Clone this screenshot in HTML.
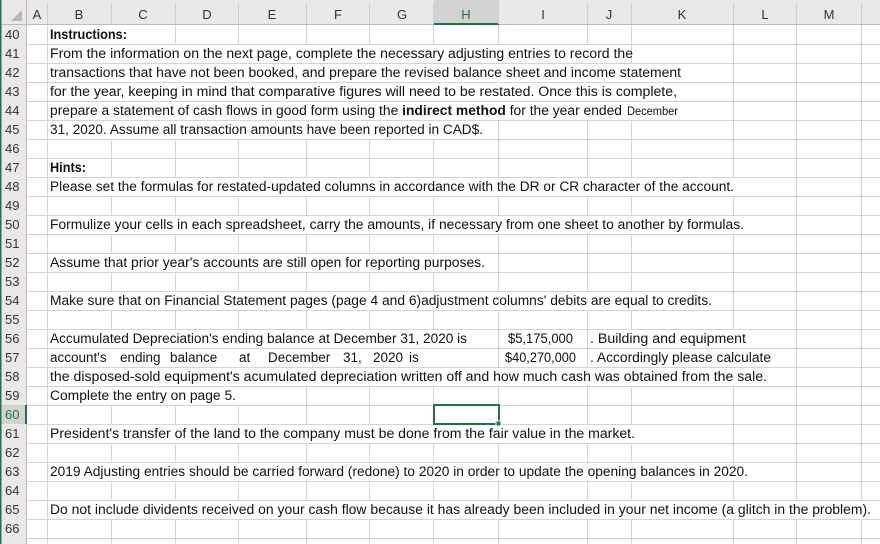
<!DOCTYPE html>
<html><head><meta charset="utf-8"><style>
html,body{margin:0;padding:0;background:#fff;width:880px;height:544px;overflow:hidden}
svg{display:block}
text{font-family:"Liberation Sans",sans-serif}
.t{font-size:13.5px;fill:#111}
.h{font-size:13px;fill:#333}
.b{font-weight:bold}
</style></head><body>
<svg width="880" height="544" viewBox="0 0 880 544" xmlns="http://www.w3.org/2000/svg">
<rect width="880" height="544" fill="#fff"/>
<g stroke="#d4d4d4" stroke-width="1">
<line x1="27" y1="44.5" x2="880" y2="44.5"/><line x1="27" y1="63.5" x2="880" y2="63.5"/><line x1="27" y1="82.5" x2="880" y2="82.5"/><line x1="27" y1="101.5" x2="880" y2="101.5"/><line x1="27" y1="120.5" x2="880" y2="120.5"/><line x1="27" y1="139.5" x2="880" y2="139.5"/><line x1="27" y1="158.5" x2="880" y2="158.5"/><line x1="27" y1="177.5" x2="880" y2="177.5"/><line x1="27" y1="196.5" x2="880" y2="196.5"/><line x1="27" y1="215.5" x2="880" y2="215.5"/><line x1="27" y1="234.5" x2="880" y2="234.5"/><line x1="27" y1="253.5" x2="880" y2="253.5"/><line x1="27" y1="272.5" x2="880" y2="272.5"/><line x1="27" y1="291.5" x2="880" y2="291.5"/><line x1="27" y1="310.5" x2="880" y2="310.5"/><line x1="27" y1="329.5" x2="880" y2="329.5"/><line x1="27" y1="348.5" x2="880" y2="348.5"/><line x1="27" y1="367.5" x2="880" y2="367.5"/><line x1="27" y1="386.5" x2="880" y2="386.5"/><line x1="27" y1="405.5" x2="880" y2="405.5"/><line x1="27" y1="424.5" x2="880" y2="424.5"/><line x1="27" y1="443.5" x2="880" y2="443.5"/><line x1="27" y1="462.5" x2="880" y2="462.5"/><line x1="27" y1="481.5" x2="880" y2="481.5"/><line x1="27" y1="500.5" x2="880" y2="500.5"/><line x1="27" y1="519.5" x2="880" y2="519.5"/><line x1="27" y1="538.5" x2="880" y2="538.5"/>
</g>
<g stroke="#d4d4d4" stroke-width="1">
<line x1="47.5" y1="25" x2="47.5" y2="544"/><line x1="111.5" y1="25" x2="111.5" y2="544"/><line x1="175.5" y1="25" x2="175.5" y2="544"/><line x1="238.5" y1="25" x2="238.5" y2="544"/><line x1="306.5" y1="25" x2="306.5" y2="544"/><line x1="369.5" y1="25" x2="369.5" y2="544"/><line x1="433.5" y1="25" x2="433.5" y2="544"/><line x1="498.5" y1="25" x2="498.5" y2="544"/><line x1="587.5" y1="25" x2="587.5" y2="544"/><line x1="631.5" y1="25" x2="631.5" y2="544"/><line x1="733.5" y1="25" x2="733.5" y2="544"/><line x1="796.5" y1="25" x2="796.5" y2="544"/><line x1="861.5" y1="25" x2="861.5" y2="544"/>
</g>
<g fill="#fff">
<rect x="48" y="25" width="127" height="19"/>
<rect x="48" y="45" width="583" height="18"/>
<rect x="48" y="64" width="685" height="18"/>
<rect x="48" y="83" width="685" height="18"/>
<rect x="48" y="102" width="685" height="18"/>
<rect x="48" y="121" width="450" height="18"/>
<rect x="48" y="159" width="63" height="18"/>
<rect x="48" y="178" width="748" height="18"/>
<rect x="48" y="216" width="748" height="18"/>
<rect x="48" y="254" width="450" height="18"/>
<rect x="48" y="292" width="685" height="18"/>
<rect x="48" y="330" width="450" height="18"/>
<rect x="588" y="330" width="208" height="18"/>
<rect x="48" y="349" width="450" height="18"/>
<rect x="588" y="349" width="208" height="18"/>
<rect x="48" y="368" width="748" height="18"/>
<rect x="48" y="387" width="258" height="18"/>
<rect x="48" y="425" width="685" height="18"/>
<rect x="48" y="463" width="748" height="18"/>
<rect x="48" y="501" width="832" height="18"/>
</g>
<rect x="0" y="0" width="880" height="25" fill="#e9e9e9"/>
<rect x="0" y="0" width="27" height="544" fill="#e9e9e9"/>
<rect x="434" y="0" width="65" height="25" fill="#d2d2d2"/>
<rect x="0" y="405" width="27" height="19" fill="#d2d2d2"/>
<line x1="0" y1="24.5" x2="880" y2="24.5" stroke="#bdbdbd"/>
<line x1="26.5" y1="0" x2="26.5" y2="544" stroke="#bdbdbd"/>
<line x1="434" y1="24" x2="499" y2="24" stroke="#217346" stroke-width="2"/>
<line x1="26" y1="405" x2="26" y2="424" stroke="#217346" stroke-width="2"/>
<rect x="0" y="0" width="1.5" height="544" fill="#217346"/>
<polygon points="11,21 22,21 22,10" fill="#b8b8b8"/>
<g stroke="#d0d0d0"><line x1="47.5" y1="3" x2="47.5" y2="24"/><line x1="111.5" y1="3" x2="111.5" y2="24"/><line x1="175.5" y1="3" x2="175.5" y2="24"/><line x1="238.5" y1="3" x2="238.5" y2="24"/><line x1="306.5" y1="3" x2="306.5" y2="24"/><line x1="369.5" y1="3" x2="369.5" y2="24"/><line x1="433.5" y1="3" x2="433.5" y2="24"/><line x1="498.5" y1="3" x2="498.5" y2="24"/><line x1="587.5" y1="3" x2="587.5" y2="24"/><line x1="631.5" y1="3" x2="631.5" y2="24"/><line x1="733.5" y1="3" x2="733.5" y2="24"/><line x1="796.5" y1="3" x2="796.5" y2="24"/><line x1="861.5" y1="3" x2="861.5" y2="24"/></g>
<g class="h" text-anchor="middle">
<text x="37" y="19">A</text><text x="79" y="19">B</text><text x="143" y="19">C</text><text x="207" y="19">D</text><text x="272" y="19">E</text><text x="338" y="19">F</text><text x="402" y="19">G</text><text x="466" y="19" fill="#217346">H</text><text x="543" y="19">I</text><text x="609" y="19">J</text><text x="682" y="19">K</text><text x="765" y="19">L</text><text x="829" y="19">M</text>
</g>
<g class="h" font-size="12.5">
<text x="5" y="39">40</text><text x="5" y="58">41</text><text x="5" y="77">42</text><text x="5" y="96">43</text><text x="5" y="115">44</text><text x="5" y="134">45</text><text x="5" y="153">46</text><text x="5" y="172">47</text><text x="5" y="191">48</text><text x="5" y="210">49</text><text x="5" y="229">50</text><text x="5" y="248">51</text><text x="5" y="267">52</text><text x="5" y="286">53</text><text x="5" y="305">54</text><text x="5" y="324">55</text><text x="5" y="343">56</text><text x="5" y="362">57</text><text x="5" y="381">58</text><text x="5" y="400">59</text><text x="5" y="419" fill="#217346">60</text><text x="5" y="438">61</text><text x="5" y="457">62</text><text x="5" y="476">63</text><text x="5" y="495">64</text><text x="5" y="514">65</text><text x="5" y="533">66</text>
</g>
<g class="t">
<text x="50" y="39" class="b" textLength="77" lengthAdjust="spacingAndGlyphs">Instructions:</text>
<text x="50" y="58" textLength="583" lengthAdjust="spacingAndGlyphs">From the information on the next page, complete the necessary adjusting entries to record the</text>
<text x="50" y="77" textLength="631" lengthAdjust="spacingAndGlyphs">transactions that have not been booked, and prepare the revised balance sheet and income statement</text>
<text x="50" y="96" textLength="627" lengthAdjust="spacingAndGlyphs">for the year, keeping in mind that comparative figures will need to be restated. Once this is complete,</text>
<text x="50" y="115" textLength="572" lengthAdjust="spacingAndGlyphs">prepare a statement of cash flows in good form using the <tspan class="b">indirect method</tspan> for the year ended</text>
<text x="627" y="115" font-size="11.5" textLength="51" lengthAdjust="spacingAndGlyphs">December</text>
<text x="50" y="134" textLength="433" lengthAdjust="spacingAndGlyphs">31, 2020. Assume all transaction amounts have been reported in CAD$.</text>
<text x="50" y="172" class="b" textLength="36" lengthAdjust="spacingAndGlyphs">Hints:</text>
<text x="50" y="191" textLength="684" lengthAdjust="spacingAndGlyphs">Please set the formulas for restated-updated columns in accordance with the DR or CR character of the account.</text>
<text x="50" y="229" textLength="694" lengthAdjust="spacingAndGlyphs">Formulize your cells in each spreadsheet, carry the amounts, if necessary from one sheet to another by formulas.</text>
<text x="50" y="267" textLength="435" lengthAdjust="spacingAndGlyphs">Assume that prior year's accounts are still open for reporting purposes.</text>
<text x="50" y="305" textLength="662" lengthAdjust="spacingAndGlyphs">Make sure that on Financial Statement pages (page 4 and 6)adjustment columns' debits are equal to credits.</text>
<text x="50" y="343" textLength="417" lengthAdjust="spacingAndGlyphs">Accumulated Depreciation's ending balance at December 31, 2020 is</text>
<text x="508" y="343" textLength="65" lengthAdjust="spacingAndGlyphs">$5,175,000</text>
<text x="590" y="343" textLength="156" lengthAdjust="spacingAndGlyphs">. Building and equipment</text>
<text y="362"><tspan x="50">account's</tspan><tspan x="120">ending</tspan><tspan x="170">balance</tspan><tspan x="239">at</tspan><tspan x="268">December</tspan><tspan x="343">31,</tspan><tspan x="373">2020</tspan><tspan x="409">is</tspan></text>
<text x="505" y="362" textLength="71" lengthAdjust="spacingAndGlyphs">$40,270,000</text>
<text x="590" y="362" textLength="181" lengthAdjust="spacingAndGlyphs">. Accordingly please calculate</text>
<text x="50" y="381" textLength="717" lengthAdjust="spacingAndGlyphs">the disposed-sold equipment's acumulated depreciation written off and how much cash was obtained from the sale.</text>
<text x="50" y="400" textLength="186" lengthAdjust="spacingAndGlyphs">Complete the entry on page 5.</text>
<text x="50" y="438" textLength="585" lengthAdjust="spacingAndGlyphs">President's transfer of the land to the company must be done from the fair value in the market.</text>
<text x="50" y="476" textLength="698" lengthAdjust="spacingAndGlyphs">2019 Adjusting entries should be carried forward (redone) to 2020 in order to update the opening balances in 2020.</text>
<text x="50" y="514" textLength="821" lengthAdjust="spacingAndGlyphs">Do not include dividents received on your cash flow because it has already been included in your net income (a glitch in the problem).</text>
</g>
<rect x="434" y="405" width="65" height="19" fill="none" stroke="#217346" stroke-width="2"/>
<rect x="496" y="421" width="5" height="5" fill="#217346" stroke="#fff" stroke-width="1"/>
</svg>
</body></html>
